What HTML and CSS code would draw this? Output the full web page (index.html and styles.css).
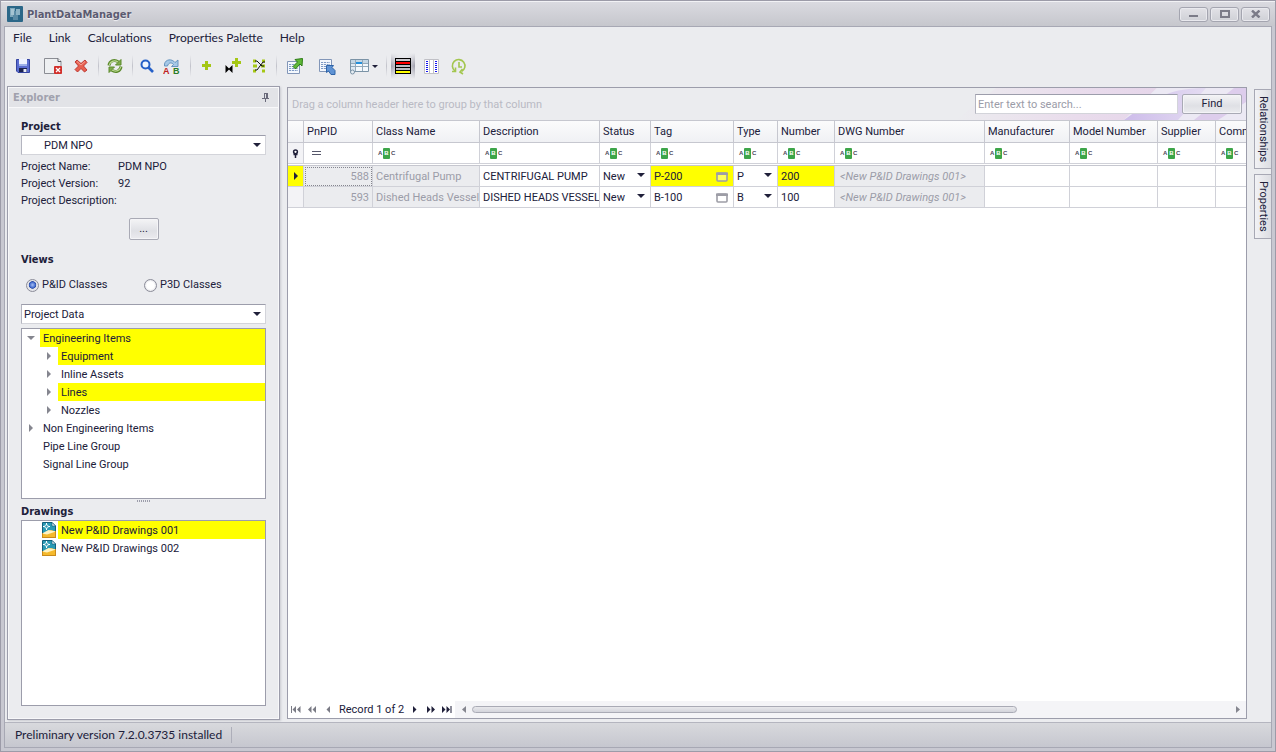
FILE: index.html
```html
<!DOCTYPE html>
<html lang="en">
<head>
<meta charset="utf-8">
<title>PlantDataManager</title>
<link rel="stylesheet" href="styles.css">
</head>
<body>
<svg class="defs" aria-hidden="true">
  <symbol id="popup" viewBox="0 0 12 10"><rect x="1" y="1" width="10" height="8" rx="1" fill="#fff" fill-opacity=".35" stroke="#9d9da6" stroke-width="1.6"/><path d="M0 .500h12v2.500H0z" fill="#9d9da6"/></symbol>
  <symbol id="dwg" viewBox="0 0 14 16"><path d="M.5.5h9.500l3.500 3.500v11.500H.5z" fill="#2a9ab4" stroke="#12607c"/><path d="M10 .5v3.500h3.500z" fill="#fff" stroke="#12607c" stroke-width=".7"/><path d="M0 12 9 8l5 1.500V16H0z" fill="#f5b92c"/><path d="M0 11.500 6.500 8 14 9.500 5 12.500z" fill="#fff2c0"/><path d="M0 15.500h14M.5 11v4.500M13.500 9v6.500" stroke="#c98a1a"/><path d="M4.500 1v7M1 4.500h7" stroke="#fff"/><circle cx="4.500" cy="4.500" r="1.700" fill="#2a9ab4" stroke="#fff" stroke-width=".9"/></symbol>
  <symbol id="sheet" viewBox="0 0 14 13"><path d="M.5.5h12v12H.5z" fill="#f4f8fd" stroke="#8296b8"/><path d="M2 3.500h9M2 5.500h9M2 7.500h9M2 9.500h9" stroke="#7d9ac6"/><path d="M4.500 2v9M7.500 2v9M10 2v9" stroke="#f4f8fd" stroke-width=".8"/></symbol>
</svg>
<div class="window">
  <header class="titlebar">
    <svg class="logo" viewBox="0 0 16 16"><rect width="16" height="16" rx="1" fill="#2b6788"/><path d="M3 2h5v9H3z" fill="#7fa8bc"/><path d="M6 5h5v9H6z" fill="#5b8ba5"/><path d="M9 3h4v6H9z" fill="#8db3c5"/><path d="M4 3h3v6H4z" fill="#a5c4d2"/></svg>
    <h1 class="title">PlantDataManager</h1>
    <div class="winbtns">
      <button class="winbtn" aria-label="Minimize"><svg width="10" height="8"><path d="M0 6h9" stroke="#7b7b88" stroke-width="2"/></svg></button>
      <button class="winbtn" aria-label="Maximize"><svg width="10" height="8"><path d="M1 1h8v6H1z" fill="none" stroke="#7b7b88" stroke-width="2"/></svg></button>
      <button class="winbtn" aria-label="Close"><svg width="10" height="8"><path d="M1 .5 8.500 7.500M8.500 .5 1 7.500" stroke="#7b7b88" stroke-width="2.400"/></svg></button>
    </div>
  </header>
  <div class="client">
    <nav class="menu">
      <button>File</button><button>Link</button><button>Calculations</button><button>Properties Palette</button><button>Help</button>
    </nav>
    <div class="toolbar" role="toolbar">
      <button class="tool w28" aria-label="Save"><svg width="16" height="16"><path d="M1.500 1.500h13v13H3L1.500 13z" fill="#5a6cd0" stroke="#3444a0"/><path d="M4 1h8v6H4z" fill="#eef2ff"/><path d="M4 6h8v2H4z" fill="#9cb0ea"/><path d="M4 10h8v4H4z" fill="#1c2350"/><path d="M8.500 11h3v3h-3z" fill="#e8ecfa"/></svg></button>
      <button class="tool w32" aria-label="Close drawing"><svg width="20" height="18"><path d="M1.500 1.500h13.500l3 3V16.500H1.500z" fill="#eef0f2" stroke="#8b8d94"/><path d="M15 1.500v3h3" fill="#fff" stroke="#55575e"/><rect x="11" y="9" width="8" height="8" rx="1" fill="#d2302b"/><path d="m13 11 4 4m0-4-4 4" stroke="#fff" stroke-width="1.300"/></svg></button>
      <button class="tool w24" aria-label="Delete"><svg width="14" height="14"><path d="M3 1 7 4.500 11 1l2 2.500L9.500 7l3.500 4-2.500 2L7 9.500 3.500 13 1 10.500 4.500 7 1 3z" fill="#e8604f" stroke="#b8302a" stroke-width=".9"/><path d="M3 2.500 7 6l4-3.500" fill="none" stroke="#f6a294"/></svg></button>
      <span class="sep"></span>
      <button class="tool w24" aria-label="Refresh"><svg width="16" height="16" fill="none"><path d="M2 7.500C2.500 3 7 1 11.500 4" stroke="#5c8a2c" stroke-width="3"/><path d="M14 1.500v5.500H8.500z" fill="#7fac4a" stroke="#5c8a2c"/><path d="M14 8.500C13.500 13 9 15 4.500 12" stroke="#5c8a2c" stroke-width="3"/><path d="M2 14.500V9H7.500z" fill="#7fac4a" stroke="#5c8a2c"/><path d="M2.300 7C3 3.500 7 1.700 11 4M13.700 9C13 12.500 9 14.300 5 12" stroke="#bcd993" stroke-width="1.200"/></svg></button>
      <span class="sep"></span>
      <button class="tool w20" aria-label="Find"><svg width="14" height="14" fill="none"><circle cx="5.500" cy="5.500" r="4" fill="#eef6ff" stroke="#2560c8" stroke-width="2"/><path d="m8.500 8.500 4.500 4.500" stroke="#2560c8" stroke-width="2.600"/></svg></button>
      <button class="tool w28" aria-label="Find and replace"><svg width="17" height="17"><path d="M1.500 8V6C2.500 1 9 .5 12 4.500L15 2V8.500H8.500l2-2C8.500 4 5.500 4.500 4.500 8z" fill="#a6c8e6" stroke="#5e8fbb" stroke-width=".9"/><text x="0" y="16" class="glyph red">A</text><text x="10" y="16" class="glyph green">B</text></svg></button>
      <span class="sep"></span>
      <button class="tool w24" aria-label="Add"><svg width="10" height="10"><path d="M4.500 0v9M0 4.500h9" stroke="#a5c715" stroke-width="3"/></svg></button>
      <button class="tool w28" aria-label="Add valve"><svg width="16" height="16"><path d="M11.500 0v9M7 4.500h9" stroke="#a5c715" stroke-width="3"/><path d="M.5 7v8L4 11.500 7.500 15V7L4 10.500z" fill="#000"/></svg></button>
      <button class="tool w24" aria-label="Route lines"><svg width="14" height="14"><path d="M1 2h3M10 2h3M1 7h4M9 7h4M1 12h3M10 12h3" stroke="#a5c715" stroke-width="3"/><path d="M3 2h2l5 5h2M3 11h2l6-8h2" fill="none" stroke="#111"/></svg></button>
      <span class="sep"></span>
      <button class="tool w28" aria-label="Export"><svg width="16" height="16"><use href="#sheet" x="0" y="3" width="14" height="13"/><path d="M8 1.500 15.500 .5 15 8l-2-2-4.500 5L6 8.500l4.500-4.500z" fill="#5fb838" stroke="#2c7d14"/></svg></button>
      <button class="tool w36" aria-label="Import"><svg width="17" height="17"><use href="#sheet" x="0" y="1" width="14" height="13"/><path d="M7.500 7.500h7L13 9.500l3 3v4h-4l-2.500-3.500-2 1.500z" fill="#5f93d4" stroke="#2f64a8"/></svg></button>
      <button class="tool w36" aria-label="Layout"><svg width="20" height="17"><path d="M1.500 1.500h18v12h-18z" fill="#f3f8fc" stroke="#7b93a6"/><path d="M2 2h17v3H2z" fill="#c3d6e4"/><path d="M2 5h4v8H2z" fill="#dfe9f2"/><path d="M6.500 2v11M13.500 2v11M2 5.500h17M2 8.500h17" stroke="#93a9ba"/><path d="M7 5h6" stroke="#2390dc" stroke-width="2"/><circle cx="3.500" cy="14" r="2" fill="#e6edf3" stroke="#7b93a6"/></svg><span class="caret"></span></button>
      <span class="sep"></span>
      <button class="tool w24 pressed" aria-label="Row colours"><svg width="16" height="16"><path d="M0 0h16v16H0z" fill="#000"/><path d="M1 2h14" stroke="#c9c9ce" stroke-width="2"/><path d="M1 5h14" stroke="#f00" stroke-width="2"/><path d="M1 8h14M1 11h14" stroke="#bdbdc4" stroke-width="2"/><path d="M1 14h14" stroke="#ff0" stroke-width="2"/></svg></button>
      <button class="tool w32" aria-label="Column colours"><svg width="15" height="15"><path d="M.5.5h14v14H.5zM5.500 .5v14M9.500 .5v14" fill="#fff" stroke="#c0c0c6"/><path d="M3 2v12M12 2v12" stroke="#1414f0" stroke-width="2" stroke-dasharray="1 1"/></svg></button>
      <button class="tool w24" aria-label="History"><svg width="16" height="17" fill="none" stroke="#a3c64f" stroke-width="1.600"><path d="M4 13A6.300 6.300 0 1 1 10.500 13.500"/><path d="M4.500 9.500v4H1"/><path d="M8 4v5h3"/><path d="m11.500 11-2.500 3 3 2"/></svg></button>
    </div>
    <div class="work">
      <aside class="explorer">
        <header class="dockhead"><h2>Explorer</h2><svg width="8" height="9"><path d="M2 .5h4M2.500 0v5M0 5.500h7M3.500 6v3" stroke="#6a6a7a" fill="none"/><path d="M4 0h2v5H4z" fill="#6a6a7a"/></svg></header>
        <div class="dockbody">
          <h3><label for="project">Project</label></h3>
          <div class="combo indent"><select id="project"><option>PDM NPO</option></select></div>
          <dl class="info"><dt>Project Name:</dt><dd>PDM NPO</dd><dt>Project Version:</dt><dd>92</dd><dt>Project Description:</dt><dd></dd></dl>
          <button class="push more">...</button>
          <h3>Views</h3>
          <div class="radios">
            <label><input type="radio" name="v" checked>P&amp;ID Classes</label>
            <label><input type="radio" name="v">P3D Classes</label>
          </div>
          <div class="combo"><select aria-label="View"><option>Project Data</option></select></div>
          <ul class="box tree">
            <li><button class="exp open" aria-label="Collapse"></button><span class="node hl">Engineering Items</span></li>
            <li class="sub"><button class="exp" aria-label="Expand"></button><span class="node hl">Equipment</span></li>
            <li class="sub"><button class="exp" aria-label="Expand"></button><span class="node">Inline Assets</span></li>
            <li class="sub"><button class="exp" aria-label="Expand"></button><span class="node hl">Lines</span></li>
            <li class="sub"><button class="exp" aria-label="Expand"></button><span class="node">Nozzles</span></li>
            <li><button class="exp" aria-label="Expand"></button><span class="node">Non Engineering Items</span></li>
            <li><span class="exp none"></span><span class="node">Pipe Line Group</span></li>
            <li><span class="exp none"></span><span class="node">Signal Line Group</span></li>
          </ul>
          <div class="grip"></div>
          <h3>Drawings</h3>
          <ul class="box files">
            <li><svg width="14" height="16"><use href="#dwg"/></svg><span class="node hl">New P&amp;ID Drawings 001</span></li>
            <li><svg width="14" height="16"><use href="#dwg"/></svg><span class="node">New P&amp;ID Drawings 002</span></li>
          </ul>
        </div>
      </aside>
      <main class="grid">
        <div class="grouppanel">
          <svg class="swoosh" viewBox="0 0 290 32" preserveAspectRatio="none" aria-hidden="true"><defs><linearGradient id="s1"><stop offset="0" stop-color="#ecdcec" stop-opacity="0"/><stop offset=".6" stop-color="#e9dcec"/><stop offset="1" stop-color="#e6d6ea"/></linearGradient><linearGradient id="s2"><stop offset="0" stop-color="#cdbcea"/><stop offset="1" stop-color="#e4dcf2"/></linearGradient></defs><path d="M40 0h161L168 32H0z" fill="url(#s1)"/><path d="M168 32 201 0h89v32z" fill="#ece9f4"/><path d="M168 32C200 8 216 0 250 0L222 32z" fill="url(#s2)"/><path d="M238 32 278 0h12v14L262 32z" fill="#ddcdec"/></svg>
          <span class="hint">Drag a column header here to group by that column</span>
          <input class="search" type="text" placeholder="Enter text to search..." aria-label="Search">
          <button class="push find">Find</button>
        </div>
        <div class="tablewrap">
          <table>
            <colgroup><col class="c16"><col class="c69"><col class="c107"><col class="c120"><col class="c51"><col class="c83"><col class="c44"><col class="c57"><col class="c150"><col class="c85"><col class="c88"><col class="c58"><col class="c88"></colgroup>
            <thead>
              <tr><th></th><th>PnPID</th><th>Class Name</th><th>Description</th><th>Status</th><th>Tag</th><th>Type</th><th>Number</th><th>DWG Number</th><th>Manufacturer</th><th>Model Number</th><th>Supplier</th><th>Comments</th></tr>
              <tr class="filter"><td class="ind"><svg width="7" height="9"><circle cx="3.500" cy="2.800" r="1.900" fill="#fff" stroke="#20203a" stroke-width="1.500"/><path d="M3.500 5v4M1.500 5.500h4" stroke="#20203a" stroke-width="1.500"/></svg></td><td><span class="eq"></span></td><td><span class="abc"><i>A</i><b>B</b><i>C</i></span></td><td><span class="abc"><i>A</i><b>B</b><i>C</i></span></td><td><span class="abc"><i>A</i><b>B</b><i>C</i></span></td><td><span class="abc"><i>A</i><b>B</b><i>C</i></span></td><td><span class="abc"><i>A</i><b>B</b><i>C</i></span></td><td><span class="abc"><i>A</i><b>B</b><i>C</i></span></td><td><span class="abc"><i>A</i><b>B</b><i>C</i></span></td><td><span class="abc"><i>A</i><b>B</b><i>C</i></span></td><td><span class="abc"><i>A</i><b>B</b><i>C</i></span></td><td><span class="abc"><i>A</i><b>B</b><i>C</i></span></td><td><span class="abc"><i>A</i><b>B</b><i>C</i></span></td></tr>
              <tr class="split"><td colspan="13"></td></tr>
            </thead>
            <tbody>
              <tr><td class="ind hl"><span class="tri"></span></td><td class="ro num focus">588</td><td class="ro">Centrifugal Pump</td><td>CENTRIFUGAL PUMP</td><td class="pick"><div class="combo flat"><select aria-label="Status"><option>New</option></select></div></td><td class="hl"><div class="tag">P-200<svg width="12" height="10"><use href="#popup"/></svg></div></td><td class="pick"><div class="combo flat"><select aria-label="Type"><option>P</option></select></div></td><td class="hl">200</td><td class="ro dwg">&lt;New P&amp;ID Drawings 001&gt;</td><td></td><td></td><td></td><td></td></tr>
              <tr><td class="ind"></td><td class="ro num">593</td><td class="ro">Dished Heads Vessel</td><td>DISHED HEADS VESSEL</td><td class="pick"><div class="combo flat"><select aria-label="Status"><option>New</option></select></div></td><td><div class="tag">B-100<svg width="12" height="10"><use href="#popup"/></svg></div></td><td class="pick"><div class="combo flat"><select aria-label="Type"><option>B</option></select></div></td><td>100</td><td class="ro dwg">&lt;New P&amp;ID Drawings 001&gt;</td><td></td><td></td><td></td><td></td></tr>
            </tbody>
          </table>
        </div>
        <footer class="navbar">
          <div class="record">
            <button aria-label="First" class="off"><svg width="10" height="7"><path d="M0 0h1v7H0zM5 0v7L1.500 3.500zM9.500 0v7L6 3.500z"/></svg></button>
            <button aria-label="Previous page" class="off"><svg width="10" height="7"><path d="M4.500 0v7L1 3.500zM9 0v7L5.500 3.500z"/></svg></button>
            <button aria-label="Previous" class="off"><svg width="10" height="7"><path d="M7 0v7L3.500 3.500z"/></svg></button>
            <span>Record 1 of 2</span>
            <button aria-label="Next"><svg width="10" height="7"><path d="M3 0v7l3.500-3.500z"/></svg></button>
            <button aria-label="Next page"><svg width="10" height="7"><path d="M1 0v7l3.500-3.500zM5.500 0v7L9 3.500z"/></svg></button>
            <button aria-label="Last"><svg width="10" height="7"><path d="M0 0v7l3.500-3.500zM4.500 0v7L8 3.500zM8.500 0h1v7h-1z"/></svg></button>
          </div>
          <div class="scroll">
            <button aria-label="Scroll left"><svg width="4" height="7"><path d="M4 0v7L0 3.500z"/></svg></button>
            <div class="track"><div class="thumb"></div></div>
            <button aria-label="Scroll right"><svg width="4" height="7"><path d="M0 0v7l4-3.500z"/></svg></button>
          </div>
        </footer>
      </main>
      <div class="sidetabs"><button>Relationships</button><button>Properties</button></div>
    </div>
    <footer class="status"><span>Preliminary version 7.2.0.3735 installed</span></footer>
  </div>
</div>
</body>
</html>
```
FILE: styles.css
```css
* { box-sizing: border-box; }
html, body { height: 100%; margin: 0; }
body { font: 11px/14px Roboto, "DejaVu Sans Condensed", sans-serif; color: #20203a; background: #ebecef; overflow: hidden; }
button { font: inherit; color: inherit; border: 0; padding: 0; background: none; }
h1, h2, h3, ul, dl, dd { margin: 0; padding: 0; }
ul { list-style: none; }
svg { display: block; flex: none; }
.defs { position: absolute; width: 0; height: 0; }

.window { height: 100%; display: flex; flex-direction: column; padding: 0 3px 3px; border: 1px solid #9c9ba8; background: #c8c8d1; }
.titlebar { flex: none; display: flex; align-items: center; height: 25px; margin: 0 -3px; padding: 0 5px 0 6px; border-top: 1px solid #f2f2f5; background: linear-gradient(#dadae0, #c6c7cd); }
.logo { width: 16px; height: 16px; }
.title { flex: 1; padding: 1px 0 0 4px; font: bold 11px/16px "DejaVu Sans Condensed", sans-serif; color: #5b5b70; text-shadow: 0 1px 1px #f4f4f7; }
.winbtns { display: flex; gap: 2px; }
.winbtn { width: 29px; height: 15px; display: grid; place-items: center; border: 1px solid #a4a5b0; border-radius: 3px; background: linear-gradient(#e2e2e7, #cfd0d6); box-shadow: inset 0 0 0 1px #e9e9ee; }

.client { flex: 1; min-height: 0; display: flex; flex-direction: column; border: 1px solid #a7a8b4; background: #ebecef; }
.menu { flex: none; display: flex; gap: 17px; padding: 0 8px; height: 22px; font: 12px/20px Lato, sans-serif; }
.toolbar { flex: none; display: flex; align-items: center; height: 34px; padding-left: 4px; }
.tool { height: 26px; display: flex; align-items: center; justify-content: center; gap: 3px; }
.w20 { width: 20px; } .w24 { width: 24px; } .w28 { width: 28px; } .w32 { width: 32px; } .w36 { width: 36px; }
.sep { width: 10px; height: 22px; background: linear-gradient(#ebecef, #c2c3cb 50%, #ebecef) center / 1px 100% no-repeat; }
.pressed { background: linear-gradient(#ebecef, transparent 50%, #ebecef), linear-gradient(90deg, #9d9dab, #dcdce2 30% 70%, #9d9dab); }
.glyph { font: bold 9px "Liberation Sans", sans-serif; }
.red { fill: #c02020; } .green { fill: #2c7d26; }
.caret, .combo::after { width: 0; height: 0; border: 4px solid transparent; border-top-color: #20203a; border-bottom: 0; }
.caret { border-width: 3px; border-bottom: 0; }

.work { flex: 1; min-height: 0; display: flex; padding: 3px 0 2px 2px; }
.explorer { flex: none; width: 273px; display: flex; flex-direction: column; border: 1px solid #9c9dab; box-shadow: inset 0 0 0 1px #f8f8fa, 1px 1px 2px #c9cad1; }
.dockhead { flex: none; height: 20px; display: flex; align-items: center; justify-content: space-between; padding: 0 8px 0 4px; margin: 1px; border-bottom: 1px solid #f8f8fa; background: #e2e3e7; }
.dockhead h2 { font: bold 11px/14px "DejaVu Sans Condensed", sans-serif; color: #a0a1ad; }
.dockbody { flex: 1; min-height: 0; display: flex; flex-direction: column; padding: 10px 13px 13px; }
h3 { font: bold 11px/16px "DejaVu Sans Condensed", sans-serif; color: #20203a; }
.combo { position: relative; flex: none; height: 20px; background: #fff; border: 1px solid #d3d4da; border-top-color: #9c9dab; border-left-color: #b4b5c0; }
.combo select { appearance: none; display: block; width: 100%; height: 100%; border: 0; margin: 0; padding: 2px 20px 0 2px; background: none; font: inherit; color: inherit; }
.combo.indent select { padding-left: 22px; }
.combo::after { content: ""; position: absolute; right: 4px; top: 7px; pointer-events: none; }
.info { display: grid; grid-template-columns: 97px 1fr; line-height: 17px; padding-top: 3px; grid-auto-rows: 17px; white-space: nowrap; }
.push { border: 1px solid #a9aab5; border-radius: 2px; background: linear-gradient(#f4f4f6, #dfe0e5 60%, #ebebef); box-shadow: inset 0 0 0 1px #f4f4f7; }
.more { align-self: center; width: 30px; height: 22px; margin: 9px 0 12px; }
.radios { display: grid; grid-template-columns: 118px auto; padding: 8px 5px 10px; }
.radios label { display: flex; align-items: center; gap: 3px; height: 18px; }
.radios input { appearance: none; width: 13px; height: 13px; margin: 0; border: 1px solid #8b8c99; border-radius: 50%; background: radial-gradient(#fff 45%, #cfd0d8); }
.radios input:checked { background: radial-gradient(circle at 50% 45%, #a8c0f4 0, #3f68cc 35%, #2c4da6 42%, #e4e5ea 50%); }
.box { background: #fff; border: 1px solid #9c9dab; }
.box li { display: flex; height: 18px; }
.tree { flex: none; height: 171px; margin-top: 4px; }
.tree .sub { padding-left: 18px; }
.node { flex: 1; padding: 2px 0 0 3px; line-height: 16px; }
.hl { background: #ff0; }
.exp { width: 18px; display: grid; place-items: center; }
.exp::before { content: ""; border: 4px solid transparent; border-left-color: #85868f; border-right: 0; }
.exp.open::before { border: 4px solid transparent; border-top-color: #85868f; border-bottom: 0; }
.exp.none::before { display: none; }
.grip { flex: none; align-self: center; width: 13px; height: 2px; margin: 1px 0 2px; background: repeating-linear-gradient(90deg, #9c9dab 0 1px, transparent 1px 2px); }
.files { flex: 1; }
.files li { padding-left: 20px; gap: 2px; align-items: center; }

.grid { flex: 1; min-width: 0; display: flex; flex-direction: column; margin: 1px 0 1px 7px; border: 1px solid #9c9dab; background: #fff; }
.grouppanel { flex: none; position: relative; display: flex; align-items: center; gap: 4px; height: 33px; padding: 0 4px; background: #ebecef; border-bottom: 1px solid #c6c7cf; }
.grouppanel > * { position: relative; }
.grouppanel .swoosh { position: absolute; right: 0; top: 0; width: 290px; height: 32px; }
.hint { flex: 1; padding-top: 2px; color: #b9bac4; }
.search { width: 203px; height: 20px; padding: 0 2px; border: 1px solid #d3d4da; border-top-color: #9c9dab; border-left-color: #b4b5c0; background: #fff; font: inherit; }
.search::placeholder { color: #9b9ca8; opacity: 1; }
.find { width: 60px; height: 20px; }
.tablewrap { flex: 1; min-height: 0; overflow: hidden; }
table { table-layout: fixed; width: 1016px; border-collapse: separate; border-spacing: 0; }
.c16 { width: 16px; } .c44 { width: 44px; } .c51 { width: 51px; } .c57 { width: 57px; } .c58 { width: 58px; } .c69 { width: 69px; } .c83 { width: 83px; } .c85 { width: 85px; } .c88 { width: 88px; } .c107 { width: 107px; } .c120 { width: 120px; } .c150 { width: 150px; }
th, td { padding: 0 0 0 3px; height: 21px; border-right: 1px solid #d0d1d8; border-bottom: 1px solid #d0d1d8; text-align: left; font-weight: normal; white-space: nowrap; overflow: hidden; }
tbody td { padding-top: 2px; }
th { height: 22px; border-color: #c6c7cf; background: linear-gradient(#fbfbfc, #f0f1f4); }
.filter td { padding-left: 5px; }
.filter .ind, td.ind { padding: 0; background: #f3f3f6; }
td.ind.hl { background: #ff0; }
.ind svg, .tri { margin: 0 auto; }
.tri { display: block; width: 0; border: 4px solid transparent; border-left-color: #20203a; border-right: 0; }
.split td { height: 2px; padding: 0; border-right: 0; border-color: #c6c7cf; }
.eq { display: block; width: 9px; height: 4px; margin-left: 3px; border: solid #55566a; border-width: 1px 0; }
.abc { display: flex; align-items: center; height: 11px; font: bold 6px/11px "Liberation Sans", sans-serif; color: #4a4a58; }
.abc i { width: 5px; font-style: normal; }
.abc b { flex: none; width: 7px; margin-right: 1px; text-align: center; background: #3da549; color: #fff; border-radius: 1px; }
.ro { background: #ebecef; color: #9b9ca8; }
td.num { padding-right: 3px; text-align: right; }
.focus { outline: 1px dotted #85868f; outline-offset: -2px; }
td.dwg { padding-left: 5px; font-style: italic; }
.tag { display: flex; align-items: center; justify-content: space-between; padding-right: 5px; }
td.pick { padding: 0; }
.flat { border: 0; background: none; }
.combo.flat select { padding: 2px 14px 0 3px; }
.flat::after { right: 5px; }

.navbar { flex: none; display: flex; height: 17px; }
.record { flex: none; display: flex; align-items: center; }
.record button { width: 16px; height: 17px; display: grid; place-items: center; fill: #20203a; }
.record .off { fill: #7a7b85; }
.record span { padding: 1px 3px 0; }
.scroll { flex: 1; display: flex; align-items: center; background: #f4f4f7; }
.scroll button { width: 17px; display: grid; place-items: center; fill: #85868f; }
.track { flex: 1; }
.thumb { width: 72%; height: 7px; border: 1px solid #a9aab5; border-radius: 4px; background: linear-gradient(#e8e8ec, #d3d4db); }

.sidetabs { flex: none; display: flex; flex-direction: column; gap: 5px; padding-top: 3px; margin-left: 7px; }
.sidetabs button { width: 17px; padding: 6px 0; writing-mode: vertical-rl; line-height: 15px; border: 1px solid #a7a8b4; border-right: 0; background: linear-gradient(90deg, #f2f2f5, #dcdde2); }
.status { flex: none; display: flex; align-items: center; height: 25px; padding-left: 10px; border-top: 1px solid #b4b5bf; background: linear-gradient(#d8d9dd, #c6c7cf); font: 12px/16px Lato, sans-serif; }
.status span { padding-right: 9px; border-right: 1px solid #adaeb9; }
```
